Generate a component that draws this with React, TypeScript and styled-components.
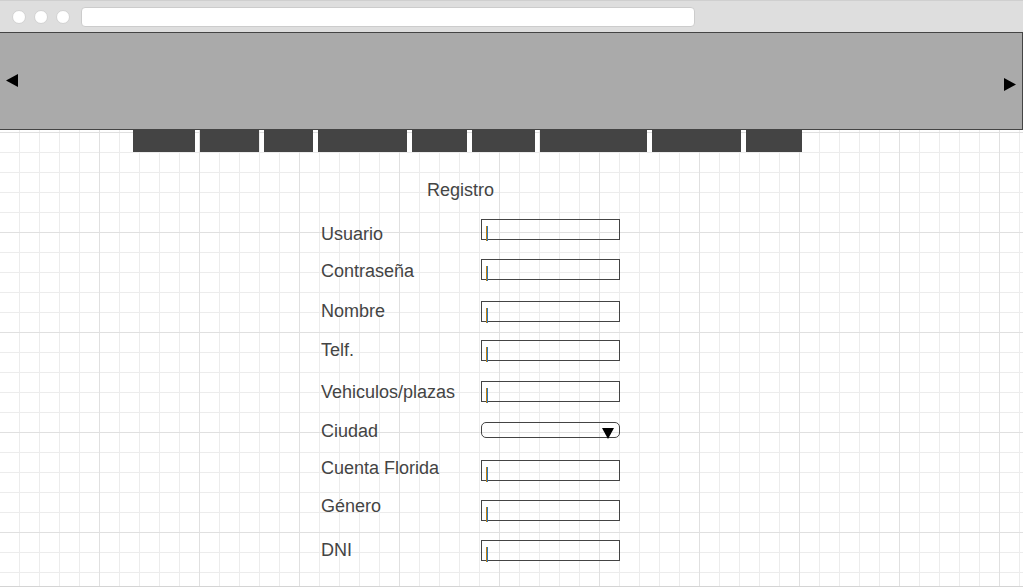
import React from "react";
import styled, { createGlobalStyle } from "styled-components";

const GlobalStyle = createGlobalStyle`
  html, body {
    margin: 0;
    padding: 0;
    background: #fff;
    font-family: "Liberation Sans", Arial, sans-serif;
  }
`;

const tabs = [62, 59, 49, 89, 55, 63, 107, 89, 56];

const fields = [
  { label: "Usuario", gap: 18, shift: 4.5 },
  { label: "Contraseña", gap: 19, shift: 1.5 },
  { label: "Nombre", gap: 21, shift: -0.5 },
  { label: "Telf.", gap: 18, shift: -0.5 },
  { label: "Vehiculos/plazas", gap: 20, shift: 0.5 },
  { label: "Ciudad", gap: 19, shift: -0.5, select: true },
  { label: "Cuenta Florida", gap: 18, shift: -2.5 },
  { label: "Género", gap: 19, shift: -4.5 },
  { label: "DNI", gap: 19, shift: -0.5 },
];

function App() {
  return (
    <>
      <GlobalStyle />
      <Window>
        <TitleBar>
          <Dots>
            <Dot />
            <Dot />
            <Dot />
          </Dots>
          <UrlBar />
        </TitleBar>
        <Page>
          <Header>
            <Arrow>
              <svg width="12" height="13" viewBox="0 0 12 13">
                <polygon points="12,0 12,13 0,6.5" fill="#000" />
              </svg>
            </Arrow>
            <Arrow $down={3}>
              <svg width="12" height="13" viewBox="0 0 12 13">
                <polygon points="0,0 0,13 12,6.5" fill="#000" />
              </svg>
            </Arrow>
          </Header>
          <Nav>
            {tabs.map((w, i) => (
              <Tab key={i} $w={w} />
            ))}
          </Nav>
          <Form>
            <Title>Registro</Title>
            {fields.map((f) => (
              <Row key={f.label} $gap={f.gap}>
                <Label $shift={f.shift}>{f.label}</Label>
                {f.select ? (
                  <Select>
                    <svg width="12" height="11" viewBox="0 0 12 11">
                      <polygon points="0,0 12,0 6,11" fill="#000" />
                    </svg>
                  </Select>
                ) : (
                  <Input>
                    <Caret />
                  </Input>
                )}
              </Row>
            ))}
          </Form>
        </Page>
      </Window>
    </>
  );
}

export default App;

const Window = styled.div`
  width: 1023px;
  height: 588px;
  display: flex;
  flex-direction: column;
  overflow: hidden;
`;

const TitleBar = styled.div`
  flex: 0 0 32px;
  box-sizing: border-box;
  display: flex;
  align-items: flex-start;
  padding: 7px 0 0 12px;
  background: #dedede;
  border-top: 1px solid #cfcfcf;
`;

const Dots = styled.div`
  display: flex;
  gap: 8px;
  margin-top: 2px;
`;

const Dot = styled.div`
  width: 14px;
  height: 14px;
  box-sizing: border-box;
  border-radius: 50%;
  background: #fff;
  border: 1px solid #d2d2d2;
`;

const UrlBar = styled.div`
  margin-left: 11px;
  width: 614px;
  height: 20px;
  box-sizing: border-box;
  margin-top: -1px;
  background: #fff;
  border: 1px solid #cccccc;
  border-radius: 4px;
`;

const Page = styled.div`
  flex: 0 0 555px;
  box-sizing: border-box;
  display: flex;
  flex-direction: column;
  border-bottom: 1px solid #d4d4d4;
  background-color: #fff;
  background-image: linear-gradient(#e0e0e0 1px, transparent 1px),
    linear-gradient(90deg, #e0e0e0 1px, transparent 1px),
    linear-gradient(#ececec 1px, transparent 1px),
    linear-gradient(90deg, #ececec 1px, transparent 1px);
  background-size: 100px 100px, 100px 100px, 20px 20px, 20px 20px;
  background-position: 99px 0, 99px 0, 19px 0, 19px 0;
`;

const Header = styled.div`
  flex: 0 0 98px;
  box-sizing: border-box;
  display: flex;
  align-items: center;
  justify-content: space-between;
  padding: 0 6px 0 6px;
  background: #aaaaaa;
  border-top: 1px solid #444;
  border-bottom: 1px solid #444;
  border-right: 1px solid #444;
`;

const Arrow = styled.div<{ $down?: number }>`
  display: flex;
  margin-top: ${(p) => (p.$down ? p.$down * 2 : -1)}px;

  svg {
    display: block;
  }
`;

const Nav = styled.div`
  display: flex;
  gap: 5px;
  height: 22px;
  padding-left: 133px;
`;

const Tab = styled.div<{ $w: number }>`
  width: ${(p) => p.$w}px;
  height: 100%;
  background: #444444;
`;

const Form = styled.div`
  display: flex;
  flex-direction: column;
  padding-left: 321px;
  color: #444;
`;

const Title = styled.div`
  margin: 28px 0 0 106px;
  font-size: 18px;
  line-height: 21px;
`;

const Row = styled.div<{ $gap: number }>`
  display: flex;
  align-items: flex-start;
  height: 21px;
  margin-top: ${(p) => p.$gap}px;
`;

const Label = styled.div<{ $shift: number }>`
  width: 160px;
  font-size: 18px;
  line-height: 21px;
  transform: translateY(${(p) => p.$shift}px);
`;

const Input = styled.div`
  width: 139px;
  height: 21px;
  box-sizing: border-box;
  border: 1px solid #444;
  display: flex;
  align-items: flex-end;
  padding-left: 4px;
`;

const Caret = styled.span`
  width: 2px;
  height: 15px;
  margin-bottom: -2px;
  background: linear-gradient(90deg, #c07f10 50%, #2f78b8 50%);
`;

const Select = styled.div`
  width: 139px;
  height: 16px;
  margin-top: 1px;
  box-sizing: border-box;
  border: 1px solid #444;
  border-radius: 5px;
  display: flex;
  align-items: flex-end;
  justify-content: flex-end;
  padding-right: 5px;

  svg {
    display: block;
    margin-bottom: -2px;
  }
`;
